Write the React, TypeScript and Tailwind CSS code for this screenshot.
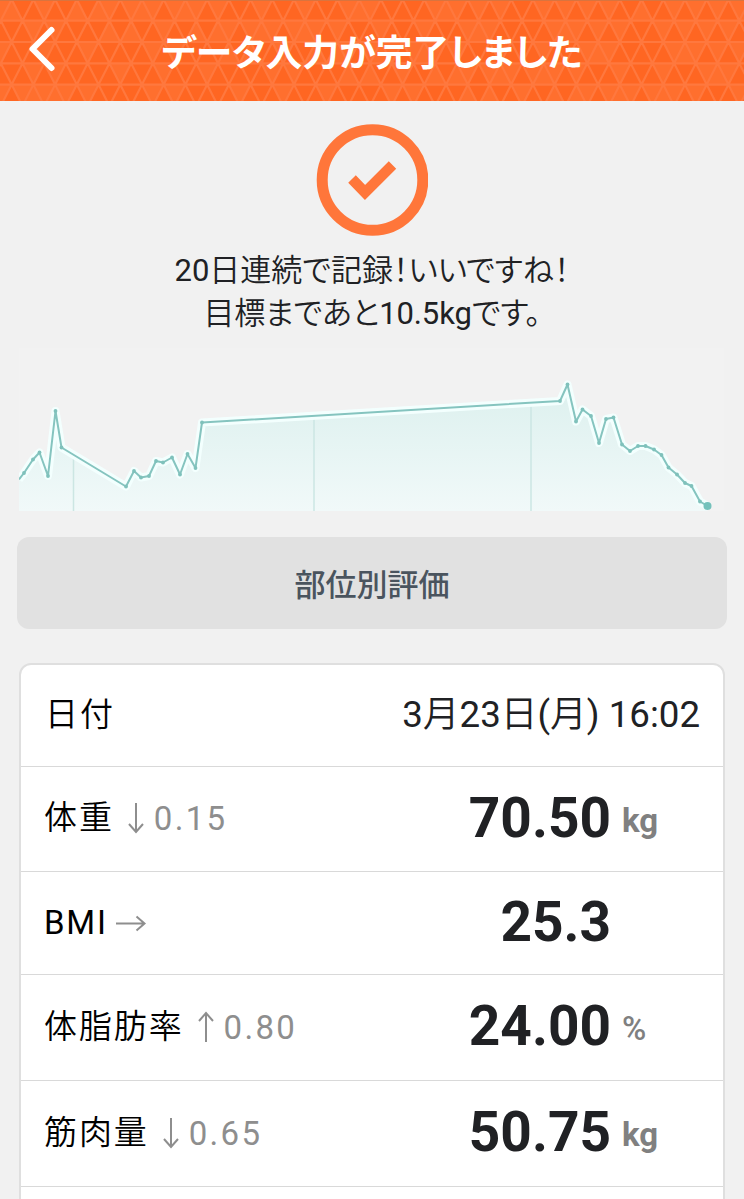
import React from "react";

type Trend = "up" | "down" | "flat";

type Metric = {
  label: string;
  trend: Trend;
  diff?: string;
  value: string;
  unit?: string;
  height: string;
};

const metrics: Metric[] = [
  { label: "体重", trend: "down", diff: "0.15", value: "70.50", unit: "kg", height: "h-[105px]" },
  { label: "BMI", trend: "flat", value: "25.3", height: "h-[103px]" },
  { label: "体脂肪率", trend: "up", diff: "0.80", value: "24.00", unit: "%", height: "h-[106px]" },
  { label: "筋肉量", trend: "down", diff: "0.65", value: "50.75", unit: "kg", height: "h-[106px]" },
];

const points = [
  [0, 131.5], [5, 125], [14, 111.5], [20.5, 104.5], [29, 128], [36.5, 63], [42.5, 99.5], [107, 138.5],
  [115, 123], [122, 129.5], [130, 128], [137, 113], [144, 114.5], [153, 109.5], [161, 126.5],
  [168.5, 106], [176.5, 120], [183, 74.5], [541, 53], [548.5, 36.5], [557, 73.5], [563.5, 61.5],
  [572, 68], [580, 95], [587, 71], [594.5, 69.5], [603, 96.5], [611, 103], [619, 98], [626.5, 98],
  [635, 101.5], [642.5, 107], [649.5, 119.5], [658, 126.5], [666, 135], [672.5, 138], [681, 153.5],
  [688.5, 158],
];

const CELL = 21.72;
const ROW = 21.3;

function HeaderPattern() {
  const cells: React.ReactNode[] = [];
  for (let row = 0; row < 5; row++) {
    const top = row * ROW - 0.6;
    for (let i = -1; i < 70; i++) {
      const x = (i * CELL) / 2 + 0.8;
      const pointsUp = (i + row) % 2 === 0;
      const y1 = pointsUp ? top + ROW : top;
      const y2 = pointsUp ? top : top + ROW;
      const shade = (i * 7 + row * 13 + ((i * i) % 11)) % 5;
      const light = pointsUp ? shade < 1 : shade < 3;
      cells.push(
        <path
          key={`${row}-${i}`}
          d={`M${x} ${y1}h${CELL}L${x + CELL / 2} ${y2}z`}
          fill={light ? "#ff6f2e" : "#ff6622"}
        />
      );
    }
  }
  // grid lines go on top so every edge has the same width
  const lines: string[] = [];
  for (let row = 0; row < 5; row++) {
    const top = row * ROW - 0.6;
    lines.push(`M0 ${top}h744`);
    for (let i = -1; i < 70; i++) {
      const x = (i * CELL) / 2 + 0.8;
      if ((i + row) % 2 === 0) {
        lines.push(`M${x} ${top + ROW}L${x + CELL / 2} ${top}L${x + CELL} ${top + ROW}`);
      }
    }
  }
  return (
    <svg className="absolute inset-0" width="744" height="101" aria-hidden="true">
      {cells}
      <path d={lines.join("")} fill="none" stroke="#ff783e" strokeWidth="2.2" />
      <path d="M0 0.5h744" stroke="#d9743f" />
    </svg>
  );
}

function Header() {
  return (
    <header className="relative h-[101px] shrink-0 overflow-hidden bg-[#ff6b28]">
      <HeaderPattern />
      <div className="relative flex h-full items-center justify-center">
        <button className="absolute left-7 top-6" aria-label="戻る">
          <svg width="30" height="50" viewBox="0 0 30 50" fill="none">
            <path d="M23.5 6L4.5 25l19 19" stroke="#fff" strokeWidth="6" strokeLinecap="round" strokeLinejoin="round" />
          </svg>
        </button>
        <h1 className="pt-2 text-[36.8px] font-bold leading-none text-white [font-feature-settings:'palt']">
          データ入力が完了しました
        </h1>
      </div>
    </header>
  );
}

function WeightChart() {
  const line = points.map((p) => p.join(",")).join(" ");
  return (
    <svg className="ml-[19px] mt-[13px] shrink-0" width="705" height="163" viewBox="0 0 705 163" fill="none">
      <defs>
        <linearGradient id="area" x1="0" y1="36" x2="0" y2="163" gradientUnits="userSpaceOnUse">
          <stop stopColor="#dcf0ee" />
          <stop offset="1" stopColor="#f1f9f9" />
        </linearGradient>
      </defs>
      <rect width="705" height="163" fill="#f2f2f2" />
      <polygon points={`0,163 ${line} 688.5,163`} fill="url(#area)" />
      <path d="M54.5 110v53M295 70v93M512 57v106" stroke="#cce6e3" strokeWidth="1.5" />
      <polyline points={line} stroke="#f3fffe" strokeWidth="8" strokeLinejoin="round" />
      <polyline points={line} stroke="#85c4bf" strokeWidth="2" strokeLinejoin="round" />
      {points.slice(1).map(([x, y]) => (
        <circle key={x} cx={x} cy={y} r="1.9" fill="#7fc1bb" />
      ))}
      <circle cx="688.5" cy="158" r="4" fill="#74c1bb" />
    </svg>
  );
}

function TrendArrow({ trend }: { trend: Trend }) {
  if (trend === "flat") {
    return (
      <svg className="ml-[7px]" width="32" height="32" viewBox="0 0 32 32" fill="none" stroke="#8e8e8e" strokeWidth="2">
        <path d="M1 16.5h29M21.5 9.5l8 7-8 7" />
      </svg>
    );
  }
  return (
    <svg
      className={`-mt-0.5 ml-[13px] mr-[9px] ${trend === "up" ? "rotate-180" : ""}`}
      width="18"
      height="32"
      viewBox="0 0 18 32"
      fill="none"
      stroke="#8e8e8e"
      strokeWidth="2"
    >
      <path d="M9 1v29M2 22l7 8 7-8" />
    </svg>
  );
}

function MetricRow({ metric }: { metric: Metric }) {
  return (
    <div className={`flex shrink-0 items-center border-b border-[#d9d9d9] pl-[23px] ${metric.height}`}>
      <div className="flex items-center text-[33px] leading-10 text-black">
        <span className={metric.trend === "flat" ? "tracking-[1.8px]" : "-mt-0.5 font-[350] tracking-[1.9px]"}>
          {metric.label}
        </span>
        <TrendArrow trend={metric.trend} />
        {metric.diff && <span className="text-[#8e8e8e] tracking-[2.3px]">{metric.diff}</span>}
      </div>
      <span className="ml-auto -mt-0.5 text-[55px] font-bold leading-none text-[#202124]">{metric.value}</span>
      <span
        className={`w-[112px] pl-[11px] pt-0.5 text-[33px] leading-none text-[#808080] ${metric.unit === "%" ? "font-medium" : "font-bold"}`}
      >
        {metric.unit}
      </span>
    </div>
  );
}

export default function App() {
  return (
    <div className="flex h-[1199px] w-[744px] flex-col overflow-hidden bg-[#f1f1f1] font-['Roboto','Noto_Sans_CJK_JP',sans-serif]">
      <Header />
      <div className="flex flex-col items-center pt-[23px]">
        <svg width="112" height="112" viewBox="0 0 112 112" fill="none" stroke="#ff763a">
          <circle cx="56.5" cy="56" r="50.3" strokeWidth="11" />
          <path d="M36 55L49 68.5 76.5 41" strokeWidth="10.5" />
        </svg>
        <div className="mt-[13px] text-center text-[31px] font-[350] leading-[43px] text-[#202124] [font-feature-settings:'palt']">
          <p>
            <span className="font-normal">20</span>日連続で記録！いいですね！
          </p>
          <p className="tracking-[-0.1px]">
            目標まであと<span className="font-normal">10.5kg</span>です。
          </p>
        </div>
      </div>
      <WeightChart />
      <button className="mx-[17px] mt-[26px] h-[92px] shrink-0 rounded-xl bg-[#e1e1e1] pt-1.5 text-[31px] font-medium text-[#4a545e]">
        部位別評価
      </button>
      <div className="ml-[19px] mr-[19px] mt-[34px] flex h-[560px] shrink-0 flex-col rounded-t-xl border-2 border-[#dfdfdf] bg-white">
        <div className="flex h-[102px] shrink-0 items-center justify-between border-b border-[#d9d9d9] pb-0.5 pl-6 pr-[23px]">
          <span className="text-[33px] font-[350] leading-10 tracking-[1.9px] text-black">日付</span>
          <span className="text-[36.7px] leading-10 text-[#202124]">
            3<span className="font-[350]">月</span>23<span className="font-[350]">日</span>(
            <span className="font-[350]">月</span>) 16:02
          </span>
        </div>
        {metrics.map((metric) => (
          <MetricRow key={metric.label} metric={metric} />
        ))}
      </div>
    </div>
  );
}
